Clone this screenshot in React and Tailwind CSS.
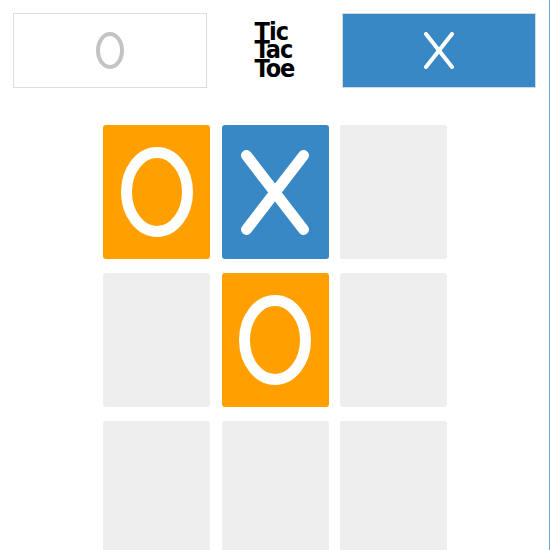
import React from 'react';

const BigO = ({ w = 72, h = 90, stroke = 11, color = '#ffffff' }) => (
  <svg width={w} height={h} viewBox={`0 0 ${w} ${h}`}>
    <ellipse cx={w / 2} cy={h / 2} rx={w / 2 - stroke / 2} ry={h / 2 - stroke / 2} fill="none" stroke={color} strokeWidth={stroke} />
  </svg>
);

const BigX = ({ w = 68, h = 85, stroke = 11, color = '#ffffff' }) => {
  const p = stroke / 2;
  return (
    <svg width={w} height={h} viewBox={`0 0 ${w} ${h}`}>
      <line x1={p} y1={p} x2={w - p} y2={h - p} stroke={color} strokeWidth={stroke} strokeLinecap="round" />
      <line x1={w - p} y1={p} x2={p} y2={h - p} stroke={color} strokeWidth={stroke} strokeLinecap="round" />
    </svg>
  );
};

const board = ['O', 'X', '', '', 'O', '', '', '', ''];

const Cell = ({ value }) => {
  if (value === 'O') {
    return (
      <div className="flex h-[134px] items-center justify-center rounded-[3px] bg-[#ffa000]">
        <BigO />
      </div>
    );
  }
  if (value === 'X') {
    return (
      <div className="flex h-[134px] items-center justify-center rounded-[3px] bg-[#3788c4]">
        <BigX />
      </div>
    );
  }
  return <div className="h-[134px] rounded-[3px] bg-[#eeeeee]" />;
};

export default function App() {
  return (
    <div className="h-[550px] w-[550px] overflow-hidden border-r border-[#6aa6d6] bg-white">
      <div className="flex items-stretch px-[13px] pt-[13px]">
        <div className="flex h-[75px] w-[194px] items-center justify-center border border-[#dddddd] bg-white">
          <BigO w={28} h={37} stroke={4} color="#c3c3c3" />
        </div>
        <div className="flex w-[136px] items-center justify-center">
          <div className="font-['DejaVu_Sans_Condensed','DejaVu_Sans',sans-serif] font-stretch-condensed text-[25px] font-bold leading-[18.3px] tracking-[-1px] text-black">
            <div>Tic</div>
            <div>Tac</div>
            <div>Toe</div>
          </div>
        </div>
        <div className="flex h-[75px] w-[194px] items-center justify-center border border-[#d4d9de] bg-[#3788c4]">
          <BigX w={30} h={37} stroke={4} />
        </div>
      </div>
      <div className="mt-[37px] ml-[103px] grid w-[344px] grid-cols-3 gap-x-[11.5px] gap-y-[14px]">
        {board.map((v, i) => (
          <Cell key={i} value={v} />
        ))}
      </div>
    </div>
  );
}
